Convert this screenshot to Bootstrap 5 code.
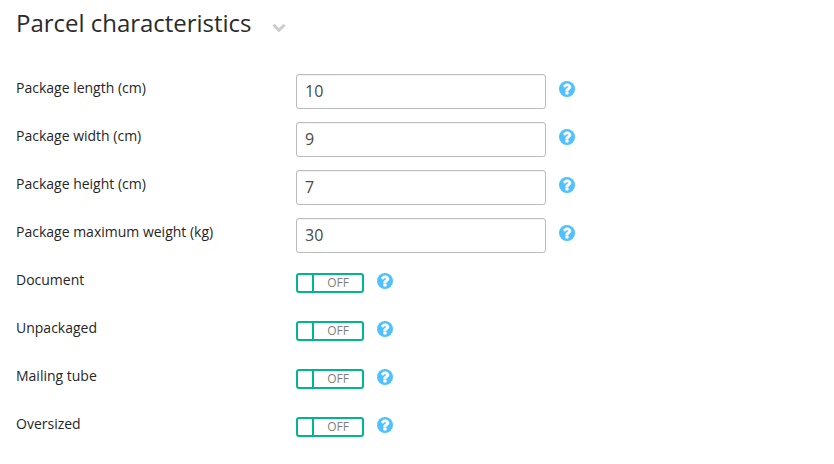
<!DOCTYPE html>
<html lang="en">
<head>
<meta charset="utf-8">
<meta name="viewport" content="width=device-width, initial-scale=1">
<title>Parcel characteristics</title>
<link href="https://cdn.jsdelivr.net/npm/bootstrap@5.3.0/dist/css/bootstrap.min.css" rel="stylesheet">
<style>
body { font-family: "Open Sans", sans-serif; font-size: 14px; line-height: 20px; color: #262626; background: #fff; }
.section-head { height: 74px; padding-top: 7px; }
.section-title { font-size: 24px; line-height: 32px; font-weight: 400; color: #2b2b2b; letter-spacing: -.02px; }
.chevron { width: 14px; height: 9px; margin: 16px 0 0 21px; }
.field-row { height: 48px; }
.field-label { width: 280px; padding-top: 4px; }
.form-control.field-input { width: 250px; height: 35px; padding: 0 8px 2px; font-size: 16px; line-height: 31px; color: #4a4a4a; border: 1px solid #bbb; border-radius: 3px; box-shadow: inset 0 1px 1px rgba(0,0,0,.05); }
.help { width: 16px; height: 16px; margin: 6.500px 0 0 13px; }
.toggle { width: 68px; height: 20px; margin-top: 7px; padding: 0; border: 2px solid #00b592; border-radius: 3px; background: #fff; }
.toggle-knob { width: 16px; border-right: 2px solid #00b592; }
.toggle-text { font-size: 12px; line-height: 16px; color: #808080; }
</style>
<script src="https://cdn.jsdelivr.net/npm/bootstrap@5.3.0/dist/js/bootstrap.bundle.min.js"></script>
</head>
<body>
<svg class="d-none">
  <symbol id="help" viewBox="128 128 1536 1536"><circle cx="896" cy="896" r="768" fill="#4fc1ff"/><path fill="#fff" stroke="#fff" stroke-width="50" d="M1024 1376v-192q0-14-9-23t-23-9h-192q-14 0-23 9t-9 23v192q0 14 9 23t23 9h192q14 0 23-9t9-23zM1280 704q0-88-55.500-163t-138.500-116-170-41q-243 0-371 213-15 24 8 42l132 100q7 6 19 6 16 0 25-12 53-68 86-92 34-24 86-24 48 0 85.500 26t37.500 59q0 38-20 61t-68 45q-63 28-115.500 86.500t-52.500 125.500v36q0 14 9 23t23 9h192q14 0 23-9t9-23q0-19 21.500-49.500t54.500-49.500q32-18 49-28.500t46-35 44.500-48 28-60.500 12.500-81z"/></symbol>
</svg>
<form class="ps-3">
  <div class="section-head d-flex align-items-start">
    <h2 class="section-title mb-0">Parcel characteristics</h2>
    <svg class="chevron" viewBox="0 0 14 9"><path d="M1.500 1.800L7 7.300l5.500-5.500" fill="none" stroke="#ccc" stroke-width="3"/></svg>
  </div>
  <div class="field-row d-flex align-items-start"><label class="field-label" for="len">Package length (cm)</label><input id="len" class="form-control field-input" type="text" value="10"><svg class="help"><use href="#help"/></svg></div>
  <div class="field-row d-flex align-items-start"><label class="field-label" for="wid">Package width (cm)</label><input id="wid" class="form-control field-input" type="text" value="9"><svg class="help"><use href="#help"/></svg></div>
  <div class="field-row d-flex align-items-start"><label class="field-label" for="hei">Package height (cm)</label><input id="hei" class="form-control field-input" type="text" value="7"><svg class="help"><use href="#help"/></svg></div>
  <div class="field-row d-flex align-items-start"><label class="field-label" for="wei">Package maximum weight (kg)</label><input id="wei" class="form-control field-input" type="text" value="30"><svg class="help"><use href="#help"/></svg></div>
  <div class="field-row d-flex align-items-start"><span class="field-label">Document</span><button type="button" class="toggle d-flex"><span class="toggle-knob h-100"></span><span class="toggle-text flex-fill text-center">OFF</span></button><svg class="help"><use href="#help"/></svg></div>
  <div class="field-row d-flex align-items-start"><span class="field-label">Unpackaged</span><button type="button" class="toggle d-flex"><span class="toggle-knob h-100"></span><span class="toggle-text flex-fill text-center">OFF</span></button><svg class="help"><use href="#help"/></svg></div>
  <div class="field-row d-flex align-items-start"><span class="field-label">Mailing tube</span><button type="button" class="toggle d-flex"><span class="toggle-knob h-100"></span><span class="toggle-text flex-fill text-center">OFF</span></button><svg class="help"><use href="#help"/></svg></div>
  <div class="field-row d-flex align-items-start"><span class="field-label">Oversized</span><button type="button" class="toggle d-flex"><span class="toggle-knob h-100"></span><span class="toggle-text flex-fill text-center">OFF</span></button><svg class="help"><use href="#help"/></svg></div>
</form>
</body>
</html>
